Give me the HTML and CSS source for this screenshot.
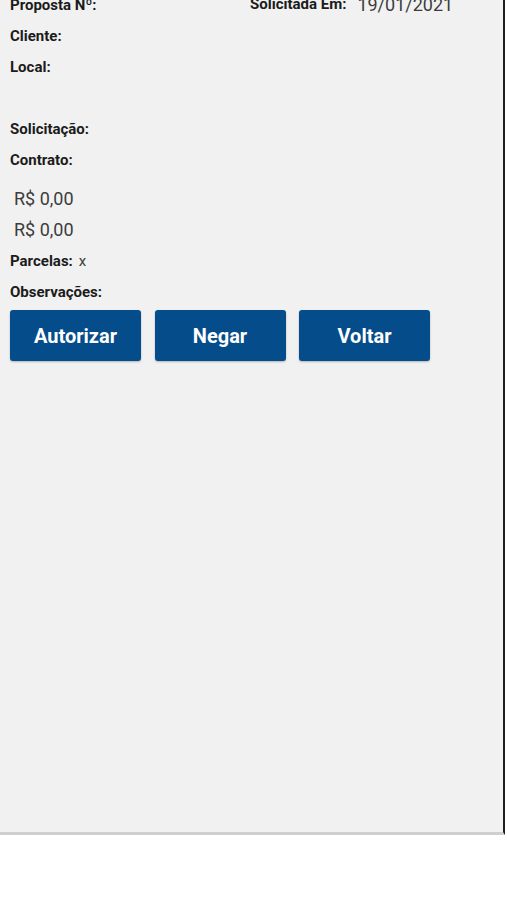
FILE: index.html
```html
<!DOCTYPE html>
<html lang="pt-BR">
<head>
<meta charset="utf-8">
<title>Proposta</title>
<link rel="stylesheet" href="styles.css">
</head>
<body>
<div class="panel">
  <div class="content">
    <div class="row first">
      <div class="col-left"><span class="label">Proposta Nº:</span></div>
      <div class="col-right"><span class="label">Solicitada Em:</span> <span class="value date">19/01/2021</span></div>
    </div>
    <div class="row"><span class="label">Cliente:</span></div>
    <div class="row"><span class="label">Local:</span></div>
    <div class="row"></div>
    <div class="row"><span class="label">Solicitação:</span></div>
    <div class="row"><span class="label">Contrato:</span></div>
    <div class="row money gap-top"><span class="value">R$ 0,00</span></div>
    <div class="row money"><span class="value">R$ 0,00</span></div>
    <div class="row"><span class="label">Parcelas:</span><span class="value small">x</span></div>
    <div class="row"><span class="label">Observações:</span></div>
    <div class="actions">
      <button class="btn">Autorizar</button>
      <button class="btn">Negar</button>
      <button class="btn">Voltar</button>
    </div>
  </div>
</div>
</body>
</html>
```
FILE: styles.css
```css
html, body {
  margin: 0;
  padding: 0;
  background: #ffffff;
}
body {
  font-family: Roboto, "Liberation Sans", sans-serif;
}
.panel {
  width: 503px;
  height: 832px;
  background: #f1f1f1;
  border-right: 2px solid #1e1e1e;
  border-bottom: 3px solid #cfcfcf;
  overflow: hidden;
}
.content {
  padding: 0 10px;
  margin-top: -12px;
}
.row {
  height: 31px;
  display: flex;
  align-items: center;
}
.row.first {
  height: 32px;
}
.col-left {
  width: 240px;
}
.col-right {
  display: flex;
  align-items: center;
  gap: 11px;
}
.label {
  font-size: 15px;
  font-weight: 700;
  color: #1b1b1b;
}
.value {
  font-size: 18px;
  color: #3c3c3c;
}
.value.small {
  font-size: 15px;
  margin-left: 6px;
}
.date {
  font-size: 18px;
}
.money {
  padding-left: 4px;
}
.gap-top {
  margin-top: 8px;
}
.actions {
  display: flex;
  gap: 13.5px;
  margin-top: 3px;
}
.btn {
  width: 131px;
  height: 51px;
  border: none;
  border-radius: 3px;
  background: #044c8a;
  color: #ffffff;
  font-family: Roboto, "Liberation Sans", sans-serif;
  font-size: 20px;
  font-weight: 700;
  box-shadow: 0 1px 2px rgba(0,0,0,0.25);
  padding: 0;
}
```
